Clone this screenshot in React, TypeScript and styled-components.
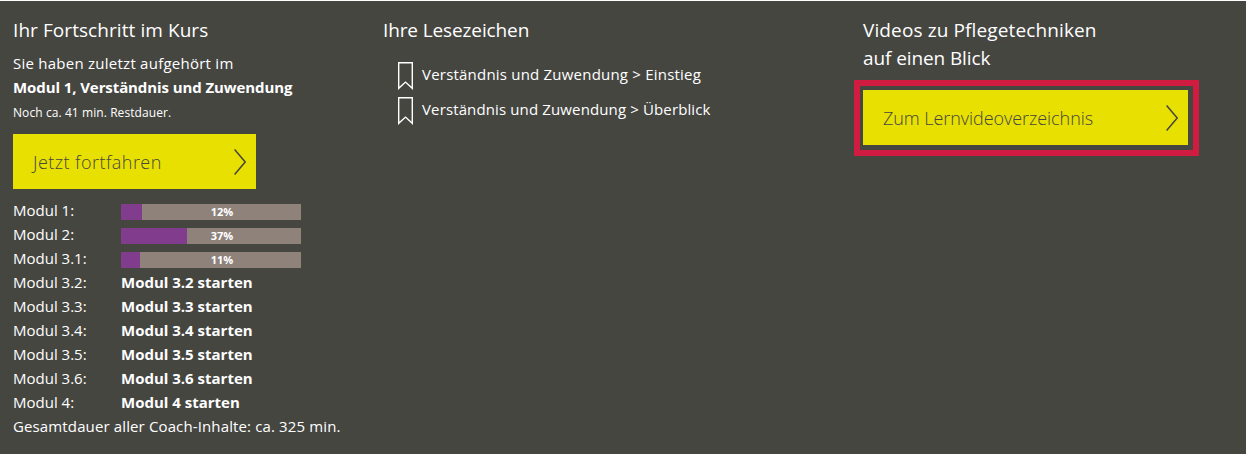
import React from "react";
import styled, { createGlobalStyle } from "styled-components";

const GlobalStyle = createGlobalStyle`
  * { box-sizing: border-box; }
  body {
    margin: 0;
    background: #fff;
    color: #fff;
    font: 15px/24px "Open Sans", "Noto Sans", sans-serif;
  }
`;

const Dashboard = styled.main`
  display: grid;
  grid-template-columns: 370px 480px 325px;
  align-items: start;
  height: 453px;
  margin-top: 1px;
  padding: 15px 0 0 13px;
  background: #464641;
  white-space: nowrap;
  overflow: hidden;
`;

const Column = styled.section`
  display: flex;
  flex-direction: column;
`;

const Heading = styled.h2<{ $spacing?: number }>`
  margin: 0;
  font-size: 19px;
  line-height: 28px;
  font-weight: 400;
  letter-spacing: ${(p) => p.$spacing ?? 0}px;
`;

const HeadingLine = styled.span<{ $spacing: number }>`
  display: block;
  letter-spacing: ${(p) => p.$spacing}px;
`;

const Text = styled.span<{ $spacing?: number }>`
  letter-spacing: ${(p) => p.$spacing ?? 0}px;
`;

const Strong = styled.strong<{ $spacing?: number }>`
  font-weight: 700;
  letter-spacing: ${(p) => p.$spacing ?? 0}px;
`;

const Progress = styled.div`
  display: flex;
  flex-direction: column;
  margin-top: 7px;
`;

const Remaining = styled.small<{ $spacing?: number }>`
  margin-top: 2px;
  font-size: 12px;
  letter-spacing: ${(p) => p.$spacing ?? 0}px;
`;

const Action = styled.button<{ $width: number; $spacing?: number }>`
  display: flex;
  align-items: center;
  justify-content: space-between;
  width: ${(p) => p.$width}px;
  height: 55px;
  padding: 0 10px 0 20px;
  border: 0;
  background: #e8e000;
  color: #464641;
  font: 300 18px/28px "Open Sans", "Noto Sans", sans-serif;
  letter-spacing: ${(p) => p.$spacing ?? 0}px;
`;

const ContinueSlot = styled.div`
  margin: 9px 0;
`;

const Highlight = styled.div`
  position: relative;
  margin-top: 18px;
  &::after {
    content: "";
    position: absolute;
    inset: -10px -11px -11px -9px;
    border: 6px solid #d01c41;
    pointer-events: none;
  }
`;

const ModuleRow = styled.div`
  display: grid;
  grid-template-columns: 108px 180px;
  height: 24px;
`;

const Bar = styled.div`
  position: relative;
  height: 16px;
  margin-top: 6px;
  background: #8e827b;
`;

const Fill = styled.div`
  height: 100%;
  background: #813c8d;
`;

const Percent = styled.span`
  position: absolute;
  inset: 0;
  padding-left: 22px;
  text-align: center;
  font-size: 11px;
  line-height: 16px;
  font-weight: 700;
`;

const Bookmarks = styled.ul`
  display: flex;
  flex-direction: column;
  margin: 18px 0 0 15px;
  padding: 0;
  list-style: none;
`;

const Bookmark = styled.li`
  display: flex;
  align-items: flex-start;
  gap: 9px;
  height: 35px;
`;

const Chevron = () => (
  <svg width="12" height="26" viewBox="0 0 12 26" fill="none" stroke="#464641" strokeWidth="1.5">
    <path d="M.6.5 11.2 13 .6 25.5" />
  </svg>
);

const BookmarkIcon = () => (
  <svg width="15" height="28" viewBox="0 0 15 28" fill="none" stroke="#fff" strokeWidth="1.4">
    <path d="M.7.7h13.6v25.6l-6.8-6.2-6.8 6.2z" />
  </svg>
);

const modules: { name: string; percent?: number; fill?: number }[] = [
  { name: "Modul 1", percent: 12, fill: 21 },
  { name: "Modul 2", percent: 37, fill: 66 },
  { name: "Modul 3.1", percent: 11, fill: 19 },
  { name: "Modul 3.2" },
  { name: "Modul 3.3" },
  { name: "Modul 3.4" },
  { name: "Modul 3.5" },
  { name: "Modul 3.6" },
  { name: "Modul 4" },
];

export default function App() {
  return (
    <>
      <GlobalStyle />
      <Dashboard>
        <Column>
          <Heading $spacing={0.07}>Ihr Fortschritt im Kurs</Heading>
          <Progress>
            <Text $spacing={0.25}>Sie haben zuletzt aufgehört im</Text>
            <Strong $spacing={-0.09}>Modul 1, Verständnis und Zuwendung</Strong>
            <Remaining $spacing={0.08}>Noch ca. 41 min. Restdauer.</Remaining>
          </Progress>
          <ContinueSlot>
            <Action $width={243} $spacing={0.46}>
              Jetzt fortfahren
              <Chevron />
            </Action>
          </ContinueSlot>
          {modules.map((m) => (
            <ModuleRow key={m.name}>
              <Text>{m.name}:</Text>
              {m.percent ? (
                <Bar>
                  <Fill style={{ width: m.fill }} />
                  <Percent>{m.percent}%</Percent>
                </Bar>
              ) : (
                <Strong>{m.name} starten</Strong>
              )}
            </ModuleRow>
          ))}
          <Text $spacing={0.13}>Gesamtdauer aller Coach-Inhalte: ca. 325 min.</Text>
        </Column>
        <Column>
          <Heading $spacing={-0.12}>Ihre Lesezeichen</Heading>
          <Bookmarks>
            <Bookmark>
              <BookmarkIcon />
              <Text $spacing={0.21}>Verständnis und Zuwendung &gt; Einstieg</Text>
            </Bookmark>
            <Bookmark>
              <BookmarkIcon />
              <Text $spacing={0.13}>Verständnis und Zuwendung &gt; Überblick</Text>
            </Bookmark>
          </Bookmarks>
        </Column>
        <Column>
          <Heading>
            <HeadingLine $spacing={0.12}>Videos zu Pflegetechniken</HeadingLine>
            <HeadingLine $spacing={-0.1}>auf einen Blick</HeadingLine>
          </Heading>
          <Highlight>
            <Action $width={325} $spacing={-0.06}>
              Zum Lernvideoverzeichnis
              <Chevron />
            </Action>
          </Highlight>
        </Column>
      </Dashboard>
    </>
  );
}
